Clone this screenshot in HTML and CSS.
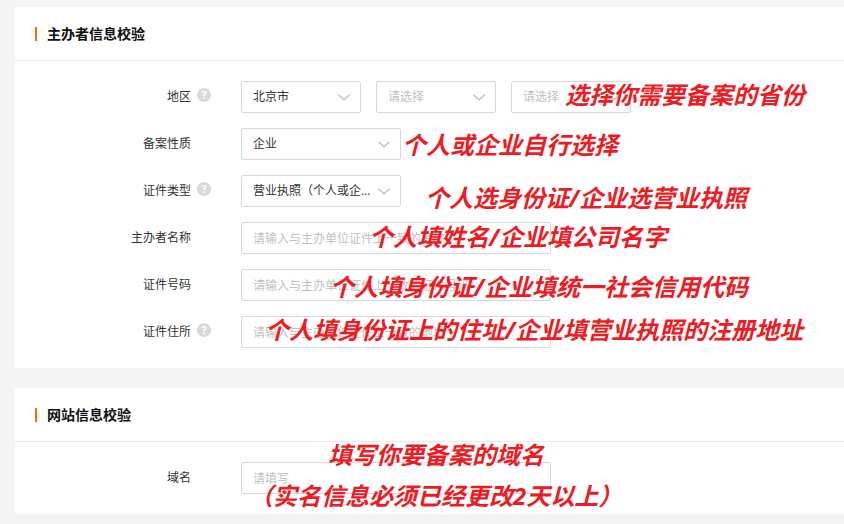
FILE: index.html
```html
<!DOCTYPE html>
<html lang="zh-CN">
<head>
    <meta charset="UTF-8">
    <meta name="viewport" content="width=device-width, initial-scale=1.0">
    <title>备案信息校验</title>
    <link rel="stylesheet" href="styles.css">
</head>
<body>
    <form class="page">
        <section class="card">
            <h2 class="card-title">主办者信息校验</h2>
            <div class="card-body">
                <div class="form-row">
                    <label for="province">地区</label>
                    <div class="help"><span class="help-icon">?</span></div>
                    <div class="controls">
                        <select id="province" class="select-short">
                            <option>北京市</option>
                        </select>
                        <select class="select-short empty" aria-label="城市">
                            <option>请选择</option>
                        </select>
                        <select class="select-short empty" aria-label="区县">
                            <option>请选择</option>
                        </select>
                    </div>
                    <p class="note note-region">选择你需要备案的省份</p>
                </div>
                <div class="form-row">
                    <label for="nature">备案性质</label>
                    <div class="help"></div>
                    <div class="controls">
                        <select id="nature">
                            <option>企业</option>
                        </select>
                    </div>
                    <p class="note note-nature">个人或企业自行选择</p>
                </div>
                <div class="form-row">
                    <label for="cert-type">证件类型</label>
                    <div class="help"><span class="help-icon">?</span></div>
                    <div class="controls">
                        <select id="cert-type">
                            <option>营业执照（个人或企业）</option>
                        </select>
                    </div>
                    <p class="note note-type">个人选身份证/企业选营业执照</p>
                </div>
                <div class="form-row">
                    <label for="owner-name">主办者名称</label>
                    <div class="help"></div>
                    <div class="controls">
                        <input type="text" id="owner-name" placeholder="请输入与主办单位证件上一致的名称">
                    </div>
                    <p class="note note-name">个人填姓名/企业填公司名字</p>
                </div>
                <div class="form-row">
                    <label for="cert-no">证件号码</label>
                    <div class="help"></div>
                    <div class="controls">
                        <input type="text" id="cert-no" placeholder="请输入与主办单位证件上一致的证件号码">
                    </div>
                    <p class="note note-number">个人填身份证/企业填统一社会信用代码</p>
                </div>
                <div class="form-row">
                    <label for="cert-address">证件住所</label>
                    <div class="help"><span class="help-icon">?</span></div>
                    <div class="controls">
                        <input type="text" id="cert-address" placeholder="请输入与主办单位证件上一致的地址">
                    </div>
                    <p class="note note-address">个人填身份证上的住址/企业填营业执照的注册地址</p>
                </div>
            </div>
        </section>
        <section class="card">
            <h2 class="card-title">网站信息校验</h2>
            <div class="card-body">
                <div class="form-row">
                    <label for="domain">域名</label>
                    <div class="help"></div>
                    <div class="controls">
                        <input type="text" id="domain" placeholder="请填写">
                    </div>
                    <p class="note note-domain">填写你要备案的域名</p>
                    <p class="note note-realname">（实名信息必须已经更改2天以上）</p>
                </div>
            </div>
        </section>
    </form>
</body>
</html>
```
FILE: styles.css
```css
body {
    margin: 0;
    background-color: #f4f4f4;
    color: #333;
    font-family: "Open Sans", "Noto Sans CJK SC", sans-serif;
    font-size: 12px;
    line-height: 16px;
}
.page {
    display: flex;
    flex-direction: column;
    gap: 20px;
    padding: 7px 0 10px 15px;
}
.card {
    background-color: #fff;
}
.card-title {
    display: flex;
    align-items: center;
    gap: 10px;
    height: 53px;
    margin: 0;
    padding-left: 20px;
    border-bottom: 1px solid #ebebeb;
    color: #111;
    font-size: 14px;
}
.card-title::before {
    content: "";
    width: 2px;
    height: 14px;
    background-color: #ff6a00;
}
.card-body {
    display: flex;
    flex-direction: column;
    gap: 15px;
    padding: 20px 0;
}
.form-row {
    position: relative;
    display: grid;
    grid-template-columns: 176px 50px 1fr;
    align-items: center;
}
label {
    text-align: right;
}
.help {
    padding: 0 6px 4px;
}
.help-icon {
    display: block;
    width: 14px;
    height: 14px;
    border-radius: 50%;
    background-color: #d9d9d9;
    color: #fff;
    font-size: 11px;
    font-weight: bold;
    line-height: 14px;
    text-align: center;
}
.controls {
    display: flex;
    gap: 15px;
}
input, select {
    box-sizing: border-box;
    height: 32px;
    margin: 0;
    border: 1px solid #d7d8d9;
    border-radius: 2px;
    background-color: #fff;
    color: #333;
    font: inherit;
}
input {
    width: 310px;
    padding: 0 11px;
}
input::placeholder {
    color: #bfbfbf;
}
select {
    appearance: none;
    width: 160px;
    padding: 0 28px 0 11px;
    background-image: url("data:image/svg+xml,%3Csvg xmlns='http://www.w3.org/2000/svg' width='12' height='7' fill='none' stroke='%23bfbfbf' stroke-width='1.4'%3E%3Cpath d='M.5.7 6 5.7 11.5.7'/%3E%3C/svg%3E");
    background-repeat: no-repeat;
    background-position: right 10px center;
    text-overflow: ellipsis;
}
.select-short {
    width: 120px;
}
.empty {
    color: #bfbfbf;
}

/* red hints lying over the form */
.note {
    position: absolute;
    margin: 0;
    color: #ed1c24;
    font-size: 24px;
    font-style: italic;
    font-weight: bold;
    line-height: 32px;
    white-space: nowrap;
}
.note-region {
    left: 550px;
    top: -2px;
}
.note-nature {
    left: 387px;
    top: 1px;
}
.note-type {
    left: 410px;
    top: 7px;
}
.note-name {
    left: 354px;
    top: -1px;
}
.note-number {
    left: 315px;
    top: 2px;
}
.note-address {
    left: 250px;
    top: -2px;
}
.note-domain {
    left: 313px;
    top: -23px;
}
.note-realname {
    left: 234px;
    top: 18px;
}
```
